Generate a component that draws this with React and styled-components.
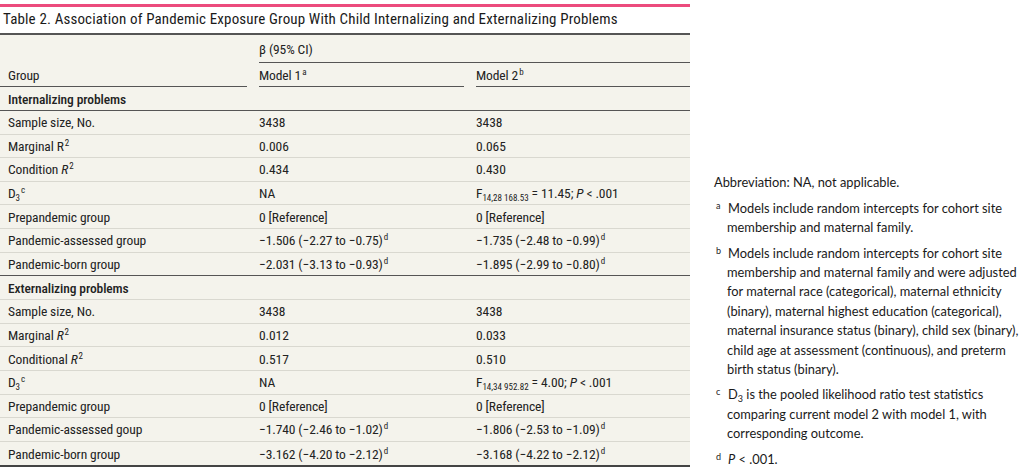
import React from 'react';
import styled, { createGlobalStyle } from 'styled-components';

const Global = createGlobalStyle`
  html, body { margin: 0; padding: 0; background: #fff; }
  body { width: 1024px; height: 469px; overflow: hidden; }
`;

const Page = styled.div`
  display: flex;
  align-items: flex-end;
  gap: 24px;
  width: 1024px;
  height: 469px;
  box-sizing: border-box;
  padding-top: 4px;
`;

const TableWrap = styled.div`
  width: 690px;
  flex: none;
  align-self: flex-start;
  font-family: "Roboto Condensed", Roboto, "Liberation Sans", sans-serif;
  font-stretch: 88%;
  color: #222;
`;

const Title = styled.div`
  border-top: 3px solid #ec4b7d;
  height: 26px;
  line-height: 24px;
  padding-left: 3px;
  font-size: 15px;
  letter-spacing: 0.15px;
  color: #1a1a1a;
`;

const Body = styled.div`
  background: #f4f3ec;
  border-top: 2px solid #555;
  border-bottom: 2px solid #444;
`;

const Row = styled.div`
  display: grid;
  grid-template-columns: 247px 205px 1fr;
  column-gap: 12px;
  align-items: center;
  height: ${(p) => p.h || 23.6}px;
  box-sizing: border-box;
  border-bottom: ${(p) => (p.dark ? '1.5px solid #555' : p.last ? 'none' : '1px solid #d9d8d0')};
  font-size: 13.5px;
  letter-spacing: -0.1px;
`;

const Cell = styled.div`
  padding-left: ${(p) => (p.first ? 8 : 0)}px;
  white-space: nowrap;
  align-self: stretch;
  display: flex;
  align-items: center;
  font-weight: ${(p) => (p.bold ? 500 : 400)};
  border-bottom: ${(p) => (p.rule ? '1.5px solid #555' : 'none')};
  grid-column: ${(p) => p.span || 'auto'};
`;

const HeadRow = styled(Row)`
  border-bottom: none;
`;

const Sup = styled.sup`
  font-size: 9px;
  line-height: 0;
  vertical-align: 5px;
  margin-left: 1px;
  letter-spacing: 0;
`;

const Sub = styled.sub`
  font-size: 9px;
  line-height: 0;
  vertical-align: -3px;
  letter-spacing: 0;
`;

const Notes = styled.div`
  width: 310px;
  flex: none;
  font-family: Lato, "Open Sans", sans-serif;
  font-size: 12.85px;
  line-height: 19.4px;
  color: #1a1a1a;
  white-space: nowrap;
  display: flex;
  flex-direction: column;
  gap: 6px;
`;

const Note = styled.div`
  padding-left: ${(p) => (p.mark ? 13 : 0)}px;
`;

const Mark = styled.span`
  display: inline-block;
  width: 12px;
  margin-left: -11px;
  font-size: 9px;
  vertical-align: 4px;
  line-height: 0;
`;

const R2 = ({ italic }) => (
  <>
    {italic ? <i>R</i> : 'R'}
    <Sup>2</Sup>
  </>
);

const D3 = () => (
  <>
    D<Sub>3</Sub>
    <Sup>c</Sup>
  </>
);

const internal = [
  { label: 'Sample size, No.', m1: '3438', m2: '3438' },
  { label: <>Marginal <R2 /></>, m1: '0.006', m2: '0.065' },
  { label: <>Condition <R2 italic /></>, m1: '0.434', m2: '0.430' },
  {
    label: <D3 />,
    m1: 'NA',
    m2: (
      <>
        F<Sub>14,28 168.53</Sub> = 11.45; <i>P</i> &lt; .001
      </>
    ),
  },
  { label: 'Prepandemic group', m1: '0 [Reference]', m2: '0 [Reference]' },
  { label: 'Pandemic-assessed group', m1: '−1.506 (−2.27 to −0.75)', m2: '−1.735 (−2.48 to −0.99)', d: true },
  { label: 'Pandemic-born group', m1: '−2.031 (−3.13 to −0.93)', m2: '−1.895 (−2.99 to −0.80)', d: true },
];

const external = [
  { label: 'Sample size, No.', m1: '3438', m2: '3438' },
  { label: <>Marginal <R2 italic /></>, m1: '0.012', m2: '0.033' },
  { label: <>Conditional <R2 italic /></>, m1: '0.517', m2: '0.510' },
  {
    label: <D3 />,
    m1: 'NA',
    m2: (
      <>
        F<Sub>14,34 952.82</Sub> = 4.00; <i>P</i> &lt; .001
      </>
    ),
  },
  { label: 'Prepandemic group', m1: '0 [Reference]', m2: '0 [Reference]' },
  { label: 'Pandemic-assessed goup', m1: '−1.740 (−2.46 to −1.02)', m2: '−1.806 (−2.53 to −1.09)', d: true },
  { label: 'Pandemic-born group', m1: '−3.162 (−4.20 to −2.12)', m2: '−3.168 (−4.22 to −2.12)', d: true },
];

function DataRows({ rows, lastDark }) {
  return rows.map((r, i) => {
    const isLast = i === rows.length - 1;
    return (
      <Row key={i} dark={isLast && lastDark} last={isLast && !lastDark}>
        <Cell first><span>{r.label}</span></Cell>
        <Cell>
          <span>
            {r.m1}
            {r.d && <Sup>d</Sup>}
          </span>
        </Cell>
        <Cell>
          <span>
            {r.m2}
            {r.d && <Sup>d</Sup>}
          </span>
        </Cell>
      </Row>
    );
  });
}

export default function App() {
  return (
    <>
      <Global />
      <Page>
        <TableWrap>
          <Title>Table 2. Association of Pandemic Exposure Group With Child Internalizing and Externalizing Problems</Title>
          <Body>
            <HeadRow h={28}>
              <Cell first />
              <Cell span="2 / 4" rule><span>β (95% CI)</span></Cell>
            </HeadRow>
            <HeadRow h={24}>
              <Cell first rule><span>Group</span></Cell>
              <Cell rule>
                <span>Model 1<Sup>a</Sup></span>
              </Cell>
              <Cell rule>
                <span>Model 2<Sup>b</Sup></span>
              </Cell>
            </HeadRow>
            <Row h={24} dark>
              <Cell first bold><span>Internalizing problems</span></Cell>
            </Row>
            <DataRows rows={internal} lastDark />
            <Row h={24}>
              <Cell first bold><span>Externalizing problems</span></Cell>
            </Row>
            <DataRows rows={external} />
          </Body>
        </TableWrap>
        <Notes>
          <Note>Abbreviation: NA, not applicable.</Note>
          <Note mark>
            <Mark>a</Mark>Models include random intercepts for cohort site
            <br />
            membership and maternal family.
          </Note>
          <Note mark>
            <Mark>b</Mark>Models include random intercepts for cohort site
            <br />
            membership and maternal family and were adjusted
            <br />
            for maternal race (categorical), maternal ethnicity
            <br />
            (binary), maternal highest education (categorical),
            <br />
            maternal insurance status (binary), child sex (binary),
            <br />
            child age at assessment (continuous), and preterm
            <br />
            birth status (binary).
          </Note>
          <Note mark>
            <Mark>c</Mark>D<Sub>3</Sub> is the pooled likelihood ratio test statistics
            <br />
            comparing current model 2 with model 1, with
            <br />
            corresponding outcome.
          </Note>
          <Note mark>
            <Mark>d</Mark>
            <i>P</i> &lt; .001.
          </Note>
        </Notes>
      </Page>
    </>
  );
}
